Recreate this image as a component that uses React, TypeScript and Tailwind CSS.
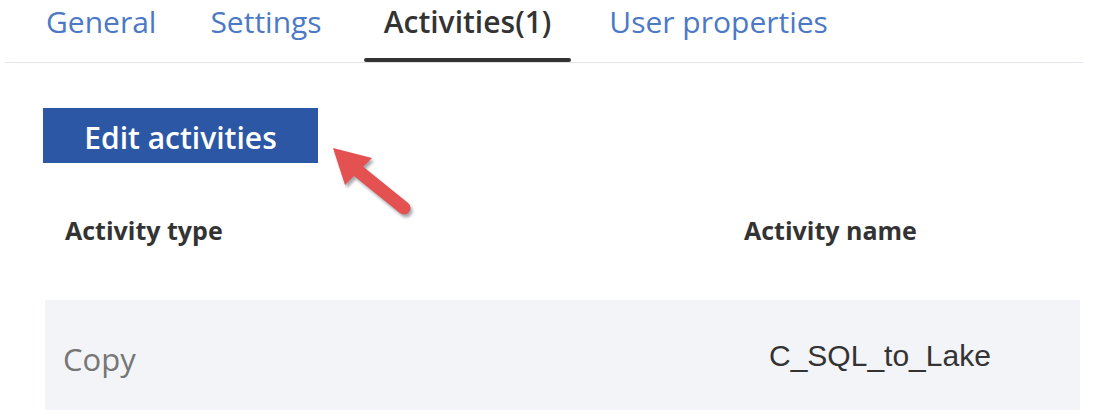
import React from "react";

const tabs = [
  { label: "General", active: false, ml: "ml-0" },
  { label: "Settings", active: false, ml: "ml-[6px]" },
  { label: "Activities(1)", active: true, ml: "ml-[14px]" },
  { label: "User properties", active: false, ml: "ml-[10px]" },
];

function Arrow() {
  return (
    <svg
      className="absolute left-[320px] top-[135px] drop-shadow-[2px_3px_1.5px_rgba(60,60,80,0.45)]"
      width="100"
      height="90"
      viewBox="0 0 100 90"
    >
      <line x1="37" y1="35" x2="84" y2="73" stroke="#e45151" strokeWidth="13" strokeLinecap="round" />
      <polygon points="13,13 25,50 52,23" fill="#e45151" />
    </svg>
  );
}

export default function App() {
  return (
    <div
      className="relative w-[1100px] h-[420px] overflow-hidden bg-white"
      style={{ fontFamily: '"Open Sans", "Noto Sans", sans-serif' }}
    >
      <div className="ml-[5px] w-[1078px] border-b border-[#e2e3e8] flex pl-[17px]">
        {tabs.map((t) => (
          <div key={t.label} className={`${t.ml} flex flex-col h-[62px] px-[24px]`}>
            <span
              className={`text-[30px] leading-[41px] pt-[1px] whitespace-nowrap ${
                t.active ? "font-semibold text-[#333333]" : "text-[#4b79c6]"
              }`}
            >
              {t.label}
            </span>
            <div className="flex-1" />
            {t.active ? <div className="h-[4px] -mx-[20px] rounded-full bg-[#333333]" /> : null}
          </div>
        ))}
      </div>

      <div className="pl-[43px] pt-[45px]">
        <button className="w-[275px] h-[55px] bg-[#2b57a5] text-white text-[30px] font-semibold leading-none flex items-center justify-center pt-[5px]">
          Edit activities
        </button>

        <div className="mt-[50px] flex text-[25px] font-bold text-[#333333] leading-[34px]">
          <div className="w-[701px] pl-[22px]">Activity type</div>
          <div>Activity name</div>
        </div>

        <div className="mt-[53px] ml-[2px] w-[1035px] h-[110px] bg-[#f3f4f8] flex items-center">
          <div className="w-[724px] pl-[18px] text-[31px] text-[#767676] pt-[8px]">Copy</div>
          <div
            className="text-[30px] text-[#333333]"
            style={{ fontFamily: '"Liberation Sans", Arial, sans-serif' }}
          >
            C_SQL_to_Lake
          </div>
        </div>
      </div>

      <Arrow />
    </div>
  );
}
